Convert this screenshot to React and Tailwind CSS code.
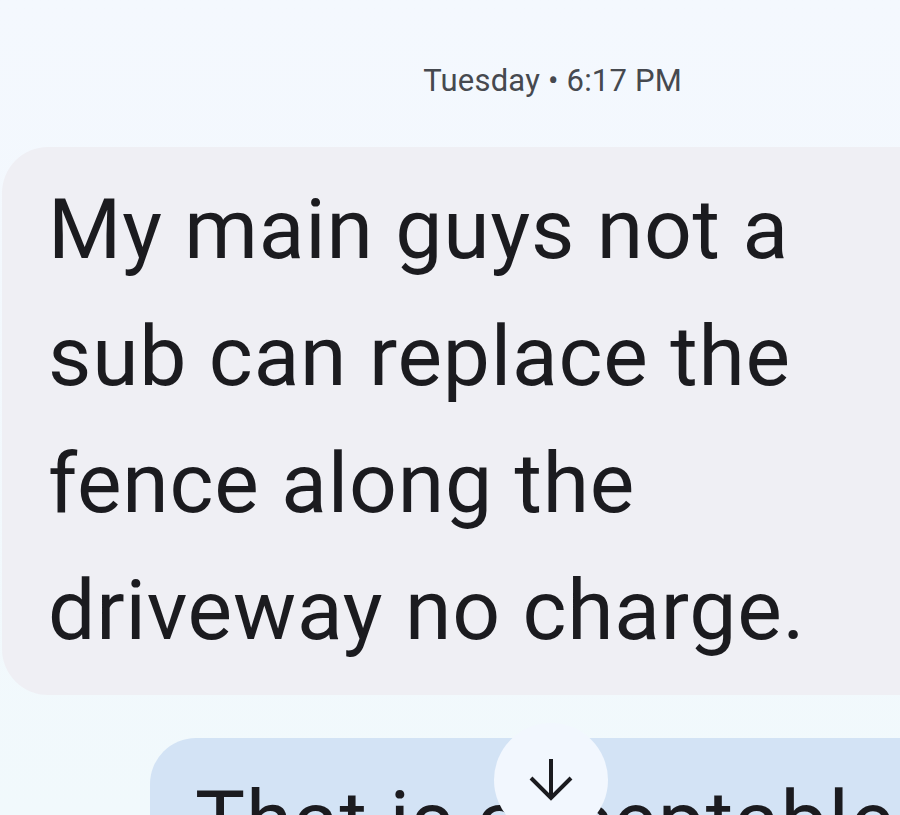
import React from "react";

export default function App() {
  return (
    <div
      className="w-[900px] h-[815px] overflow-hidden bg-gradient-to-b from-[#f4f8fe] to-[#f1f9fc] relative"
      style={{ fontFamily: "Roboto, 'Noto Sans', sans-serif" }}
    >
      <div className="h-[147px] flex justify-end pr-[218px] pt-[61px]">
        <span className="text-[31px] leading-[40px] text-[#46494f] tracking-[0.2px]">
          Tuesday • 6:17 PM
        </span>
      </div>
      <div className="ml-[2px] mr-[-60px] rounded-[46px] bg-[#efeff4] pl-[46px] pt-[19px] pb-[21px]">
        <p className="text-[84px] leading-[127px] text-[#1b1b1f] tracking-[0.8px]">
          My main guys not a<br />
          sub can replace the<br />
          fence along the<br />
          driveway no charge.
        </p>
      </div>
      <div className="ml-[150px] mr-[-60px] mt-[43px] rounded-[46px] bg-[#d3e3f5] pl-[45px] pt-[20px] h-[200px]">
        <p className="text-[84px] leading-[127px] text-[#1b1b1f] tracking-[0.8px] whitespace-nowrap">That is acceptable</p>
      </div>
      <div className="absolute left-[494px] top-[723px] w-[114px] h-[114px] rounded-full bg-[#f2f7fe] flex items-start justify-center pt-[35px]">
        <svg width="46" height="46" viewBox="0 0 46 46" fill="none" stroke="#1b1b1f" strokeWidth="4" strokeLinecap="butt" strokeLinejoin="miter">
          <path d="M23 1 V40" />
          <path d="M3 20 L23 40 L43 20" />
        </svg>
      </div>
    </div>
  );
}
